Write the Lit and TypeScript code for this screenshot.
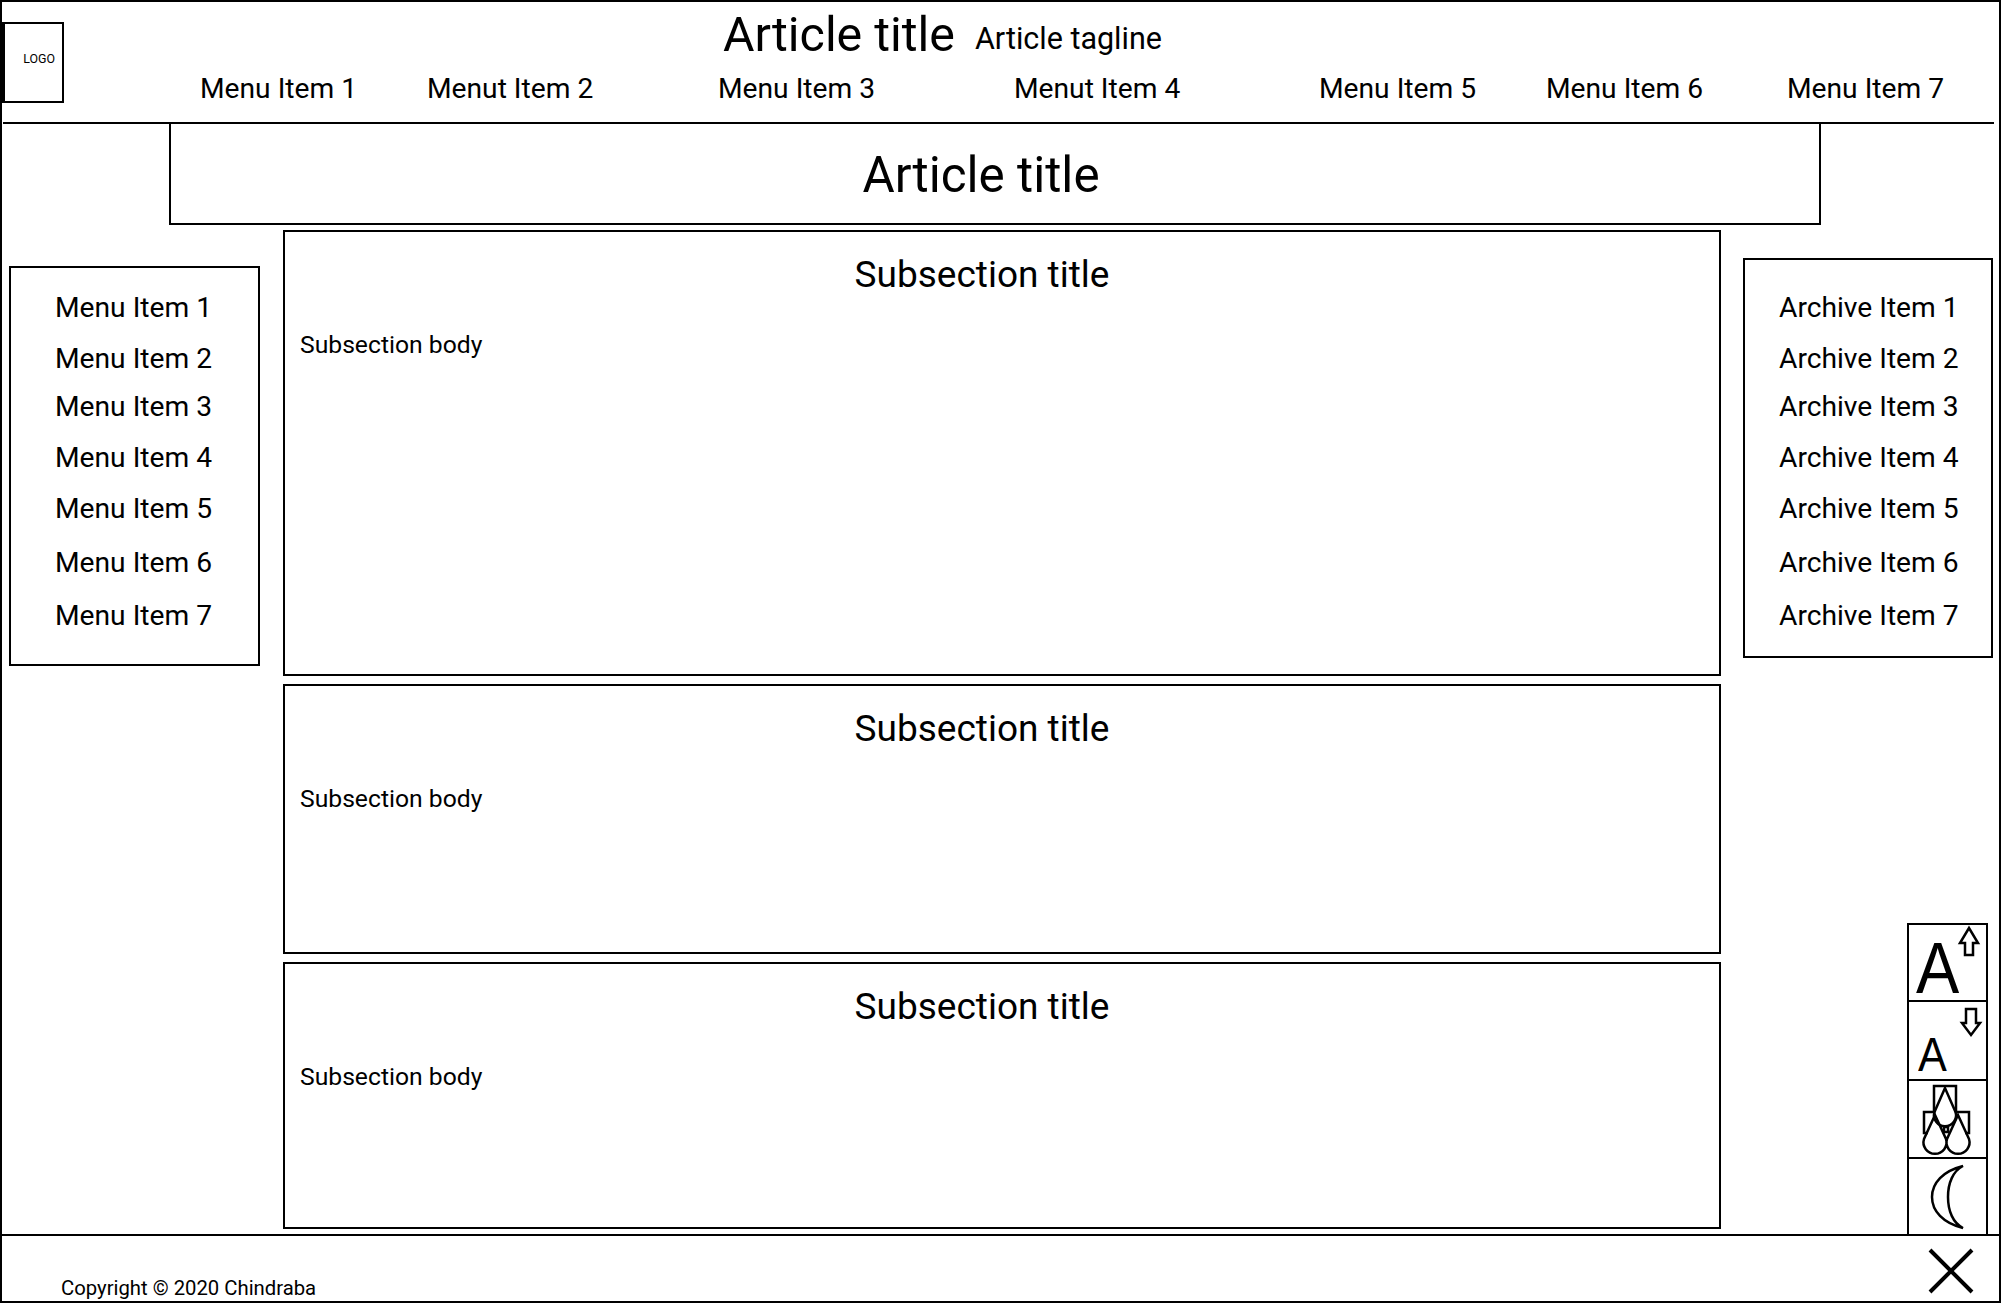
import { LitElement, html, css, svg } from 'lit';
import { customElement } from 'lit/decorators.js';

const headerMenu = [
  ['Menu Item 1', 227],
  ['Menut Item 2', 291],
  ['Menu Item 3', 296],
  ['Menut Item 4', 305],
  ['Menu Item 5', 227],
  ['Menu Item 6', 241],
  ['Menu Item 7', 200],
] as const;

// rows in the side lists are not evenly spaced in the reference
const sideGaps = [0, 51, 48, 51, 51, 54, 53];
const sections = [446, 270, 267];

@customElement('app-root')
export class AppRoot extends LitElement {
  static styles = css`
    :host {
      display: block;
      position: relative;
      width: 2001px;
      height: 1303px;
      box-sizing: border-box;
      border: 2px solid #000;
      background: #fff;
      color: #000;
      font-family: Roboto, sans-serif;
      overflow: hidden;
    }

    .header {
      height: 120px;
      margin-right: 5px;
      margin-left: 1px;
      border-bottom: 2px solid #000;
      display: flex;
    }

    .logo {
      width: 62px;
      height: 81px;
      margin-top: 20px;
      margin-left: -1px;
      box-sizing: border-box;
      border: 2px solid #000;
      border-left-width: 3px;
      display: flex;
      align-items: center;
      justify-content: flex-end;
      padding-right: 7px;
      padding-bottom: 9px;
      font-size: 12.400px;
      flex: none;
    }

    .head-main {
      flex: 1;
      padding-left: 136px;
    }

    .head-title {
      display: flex;
      align-items: flex-start;
      gap: 20px;
      height: 70px;
      padding-left: 523px;
      padding-top: 2px;
      box-sizing: border-box;
    }

    .head-title .name {
      font-size: 48.300px;
      line-height: 62px;
    }

    .head-title .tagline {
      font-size: 30.500px;
      line-height: 36px;
      padding-top: 17px;
    }

    .head-menu {
      display: flex;
      font-size: 28.200px;
      line-height: 34px;
    }

    .head-menu span {
      white-space: nowrap;
      flex: none;
    }

    .banner {
      margin-left: 167px;
      width: 1652px;
      height: 101px;
      box-sizing: border-box;
      border: 2px solid #000;
      border-top: none;
      padding-right: 28px;
      text-align: center;
      font-size: 49.400px;
      line-height: 102px;
    }

    .body {
      display: grid;
      grid-template-columns: 252px 1438px 250px;
      column-gap: 22px;
      padding-left: 7px;
      padding-top: 5px;
      align-items: start;
    }

    .side {
      box-sizing: border-box;
      border: 2px solid #000;
      height: 400px;
      font-size: 28.200px;
      line-height: 34px;
    }

    .side.left {
      margin-top: 36px;
      margin-right: 1px;
      padding: 23px 0 0 44px;
    }

    .side.right {
      margin-top: 28px;
      padding: 31px 0 0 34px;
    }

    .main {
      display: flex;
      flex-direction: column;
      gap: 8px;
    }

    .section {
      box-sizing: border-box;
      border: 2px solid #000;
      padding: 0 55px 0 15px;
    }

    .section h2 {
      margin: 0;
      padding-top: 22px;
      font-size: 37px;
      line-height: 42px;
      font-weight: 400;
      text-align: center;
    }

    .section p {
      margin: 0;
      padding-top: 34px;
      font-size: 24.700px;
      line-height: 30px;
    }

    .footer {
      position: absolute;
      left: 0;
      right: 0;
      bottom: 0;
      height: 67px;
      border-top: 2px solid #000;
      box-sizing: border-box;
      background: #fff;
      display: flex;
      justify-content: space-between;
      align-items: flex-end;
      padding-left: 59px;
      padding-bottom: 1px;
      font-size: 20.300px;
      line-height: 24px;
    }

    .close {
      display: block;
      margin-right: 25px;
      margin-bottom: 6px;
    }

    .tools {
      position: absolute;
      left: 1905px;
      top: 921px;
      width: 81px;
      height: 313px;
      box-sizing: border-box;
      border: 2px solid #000;
      border-bottom: none;
      background: #fff;
    }

    .tool {
      position: relative;
      height: 78px;
      box-sizing: border-box;
      border-bottom: 2px solid #000;
    }

    .tool:first-child {
      height: 77px;
    }

    .tool:nth-child(2) {
      height: 79px;
    }

    .tool:last-child {
      border-bottom: none;
      height: 75px;
      margin-right: 1px;
    }

    .tool svg {
      position: absolute;
      left: 0;
      top: 0;
      overflow: visible;
    }

    .tool .big,
    .tool .small {
      position: absolute;
      font-family: "Liberation Sans", sans-serif;
      transform: scaleX(0.9);
      transform-origin: left center;
    }

    .tool .big {
      left: 7px;
      top: 13px;
      font-size: 72px;
      line-height: 60px;
    }

    .tool .small {
      left: 9px;
      top: 32px;
      font-size: 48px;
      line-height: 42px;
    }
  `;

  sideList(label: string) {
    return [1, 2, 3, 4, 5, 6, 7].map(
      (n, i) => html`<div style="margin-top:${i ? sideGaps[i] - 34 : 0}px">${label} ${n}</div>`
    );
  }

  toolIcon(shapes: unknown) {
    return html`<svg width="78" height="76" viewBox="0 0 78 76" fill="none" stroke="#000" stroke-width="2.500">${shapes}</svg>`;
  }

  render() {
    return html`
      <div class="header">
        <div class="logo">LOGO</div>
        <div class="head-main">
          <div class="head-title">
            <span class="name">Article title</span>
            <span class="tagline">Article tagline</span>
          </div>
          <div class="head-menu">
            ${headerMenu.map(([label, w]) => html`<span style="width:${w}px">${label}</span>`)}
          </div>
        </div>
      </div>
      <div class="banner">Article title</div>
      <div class="body">
        <nav class="side left">${this.sideList('Menu Item')}</nav>
        <div class="main">
          ${sections.map(
            (h) => html`<section class="section" style="height:${h}px">
              <h2>Subsection title</h2>
              <p>Subsection body</p>
            </section>`
          )}
        </div>
        <aside class="side right">${this.sideList('Archive Item')}</aside>
      </div>
      <div class="tools">
        <div class="tool">
          <span class="big">A</span>
          ${this.toolIcon(svg`<path d="M56 30V18H51L60 3L69 18H64V30Z" />`)}
        </div>
        <div class="tool">
          <span class="small">A</span>
          ${this.toolIcon(svg`<path d="M57 7V21H53L62 33L71 21H67V7Z" />`)}
        </div>
        <div class="tool">
          ${this.toolIcon(svg`
            <path d="M25 32V5H47V32" />
            <path d="M25 31H15V52H19M47 31H60V52H56M35 46H39V51H35Z" />
            <path d="M36 7L25.500 31A11 11 0 1 0 46.500 31Z" />
            <path d="M26 34L15 58A11.500 11.500 0 1 0 37 58ZM49 34L38 58A11.500 11.500 0 1 0 60 58Z" />
          `)}
        </div>
        <div class="tool">
          ${this.toolIcon(svg`<path d="M54 7C34 12 23 24 23 38C23 52 34 64 54 69C44 64 39 52 39 38C39 24 44 12 54 7Z" />`)}
        </div>
      </div>
      <div class="footer">
        <span>Copyright © 2020 Chindraba</span>
        <svg class="close" width="46" height="46" viewBox="0 0 46 46" fill="none" stroke="#000" stroke-width="4">
          <path d="M2 2L44 44M44 2L2 44" />
        </svg>
      </div>
    `;
  }
}
